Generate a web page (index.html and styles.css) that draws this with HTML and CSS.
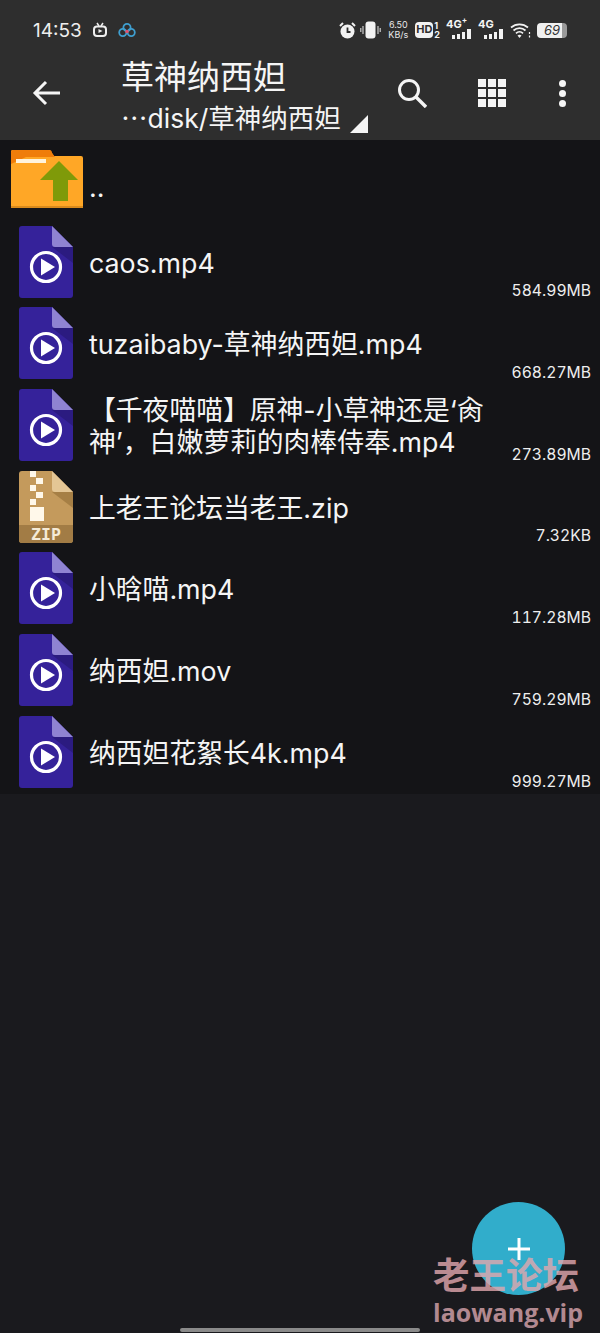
FILE: index.html
```html
<!DOCTYPE html>
<html lang="zh-CN">
<head>
    <meta charset="UTF-8">
    <meta name="viewport" content="width=device-width, initial-scale=1.0">
    <title>草神纳西妲</title>
    <link rel="stylesheet" href="styles.css">
</head>
<body>

<svg class="defs" width="0" height="0">
    <defs>
        <symbol id="video" viewBox="0 0 54 72">
            <path d="M3 0H33L54 21V69a3 3 0 0 1-3 3H3a3 3 0 0 1-3-3V3a3 3 0 0 1 3-3z" fill="#35229a"/>
            <path d="M33 21H54V37z" fill="#2b1b80"/>
            <path d="M33 0L54 21H36a3 3 0 0 1-3-3z" fill="#8f83d2"/>
            <circle cx="27" cy="41" r="14.5" fill="none" stroke="#fff" stroke-width="3.2"/>
            <path d="M22 32.5L36 41L22 49.5z" fill="#fff"/>
        </symbol>
    </defs>
</svg>

<div class="app">
    <header class="top">
        <div class="status">
            <div class="status-left">
                <span class="clock">14:53</span>
                <svg width="16" height="16" viewBox="0 0 16 16">
                    <path d="M5 1L7 4M11 1L9 4" stroke="#eee" stroke-width="1.5" fill="none"/>
                    <rect x="2" y="4.5" width="12" height="9.5" rx="3" fill="none" stroke="#eee" stroke-width="2"/>
                    <path d="M6.5 7l4 2-4 2z" fill="#eee"/>
                </svg>
                <svg width="18" height="16" viewBox="0 0 18 16">
                    <circle cx="9" cy="5.5" r="3.6" fill="none" stroke="#3f9fd0" stroke-width="1.8"/>
                    <circle cx="4.8" cy="10.5" r="3.6" fill="none" stroke="#3f9fd0" stroke-width="1.8"/>
                    <circle cx="13.2" cy="10.5" r="3.6" fill="none" stroke="#3f9fd0" stroke-width="1.8"/>
                    <circle cx="9" cy="9.5" r="1.8" fill="#e0506a"/>
                </svg>
            </div>
            <div class="status-right">
                <svg class="alarm" width="17" height="17" viewBox="0 0 17 17">
                    <circle cx="8.5" cy="9.5" r="7" fill="#f2f2f2"/>
                    <path d="M8.5 5.5v4.5h3" stroke="#2e2e2e" stroke-width="1.8" fill="none"/>
                    <path d="M1 4L4 1M16 4L13 1" stroke="#f2f2f2" stroke-width="2"/>
                </svg>
                <svg width="21" height="18" viewBox="0 0 21 18">
                    <rect x="5.5" y="0.5" width="10" height="17" rx="3" fill="#f2f2f2"/>
                    <path d="M3 5v8M0.8 7v4M18 5v8M20.2 7v4" stroke="#ccc" stroke-width="1.2"/>
                </svg>
                <div class="speed"><span>6.50</span><span>KB/s</span></div>
                <div class="hd"><b>HD</b><div class="hd-nums"><span>1</span><span>2</span></div></div>
                <div class="net">
                    <span>4G<sup>+</sup></span>
                    <svg width="20" height="10" viewBox="0 0 20 10"><path d="M0 6h3v4H0zM5 5h3v5H5zM10 3h3v7h-3zM15 0h4v10h-4z" fill="#f2f2f2"/></svg>
                </div>
                <div class="net">
                    <span>4G</span>
                    <svg width="20" height="10" viewBox="0 0 20 10"><path d="M0 6h3v4H0zM5 5h3v5H5zM10 3h3v7h-3zM15 0h4v10h-4z" fill="#f2f2f2"/></svg>
                </div>
                <svg width="21" height="16" viewBox="0 0 21 16">
                    <path d="M1 5.5a13 13 0 0 1 17 0M3.5 8.5a9 9 0 0 1 12 0M6 11.3a5 5 0 0 1 7 0" stroke="#f2f2f2" stroke-width="1.7" fill="none"/>
                    <path d="M9.5 16l-2-2.4a3 3 0 0 1 4 0z" fill="#f2f2f2"/>
                    <path d="M19.5 10v2M19.5 13.5v2" stroke="#f2f2f2" stroke-width="1.2"/>
                </svg>
                <div class="battery">69</div>
            </div>
        </div>
        <div class="toolbar">
            <button class="tool back">
                <svg width="30" height="28" viewBox="0 0 30 28">
                    <path d="M28 14H4M14 3L3 14l11 11" stroke="#f5f5f5" stroke-width="3" fill="none"/>
                </svg>
            </button>
            <div class="titles">
                <div class="title">草神纳西妲</div>
                <div class="path"><span>⋯disk/草神纳西妲</span><i class="corner"></i></div>
            </div>
            <div class="actions">
                <button class="tool">
                    <svg width="30" height="30" viewBox="0 0 30 30">
                        <circle cx="12" cy="12" r="9.5" stroke="#f5f5f5" stroke-width="3" fill="none"/>
                        <path d="M19 19l10 10" stroke="#f5f5f5" stroke-width="3.4"/>
                    </svg>
                </button>
                <button class="tool">
                    <div class="dots-grid"><i></i><i></i><i></i><i></i><i></i><i></i><i></i><i></i><i></i></div>
                </button>
                <button class="tool">
                    <div class="dots-col"><i></i><i></i><i></i></div>
                </button>
            </div>
        </div>
    </header>

    <ul class="files">
        <li class="row parent">
            <svg class="folder" width="74" height="60" viewBox="0 0 74 60">
                <path d="M2 0H40l4 6H71a2 2 0 0 1 2 2V57H1V1z" fill="#ffa726"/>
                <path d="M1 2a2 2 0 0 1 2-2H39a3 3 0 0 1 3 3l3 4H16L1 14z" fill="#ef7d0a"/>
                <rect x="6" y="9" width="30" height="4" fill="#fff3dc"/>
                <rect x="1" y="56" width="72" height="2" fill="#d98a1c"/>
                <path d="M49 11L68 30H58V51H43V30H30z" fill="#7f9a09"/>
            </svg>
            <div class="name up">..</div>
        </li>
        <li class="row">
            <svg class="icon"><use href="#video"/></svg>
            <div class="name">caos.mp4</div>
            <div class="size">584.99MB</div>
        </li>
        <li class="row">
            <svg class="icon"><use href="#video"/></svg>
            <div class="name">tuzaibaby-草神纳西妲.mp4</div>
            <div class="size">668.27MB</div>
        </li>
        <li class="row">
            <svg class="icon"><use href="#video"/></svg>
            <div class="name">【千夜喵喵】原神-小草神还是‘肏神’，白嫩萝莉的肉棒侍奉.mp4</div>
            <div class="size">273.89MB</div>
        </li>
        <li class="row">
            <svg class="icon" viewBox="0 0 54 72">
                <path d="M3 0H33L54 21V69a3 3 0 0 1-3 3H3a3 3 0 0 1-3-3V3a3 3 0 0 1 3-3z" fill="#c49a5c"/>
                <path d="M33 21H54V37z" fill="#a67f45"/>
                <path d="M33 0L54 21H36a3 3 0 0 1-3-3z" fill="#e4c695"/>
                <path d="M0 54H54V69a3 3 0 0 1-3 3H3a3 3 0 0 1-3-3z" fill="#a27c45"/>
                <path d="M11 0h6v6h-6zM17 7h7v6h-7zM11 14h6v6h-6zM17 21h7v6h-7zM11 28h6v6h-6zM11 36h14v14H11z" fill="#fff8ea"/>
                <text class="zip-label" x="27" y="69">ZIP</text>
            </svg>
            <div class="name">上老王论坛当老王.zip</div>
            <div class="size">7.32KB</div>
        </li>
        <li class="row">
            <svg class="icon"><use href="#video"/></svg>
            <div class="name">小晗喵.mp4</div>
            <div class="size">117.28MB</div>
        </li>
        <li class="row">
            <svg class="icon"><use href="#video"/></svg>
            <div class="name">纳西妲.mov</div>
            <div class="size">759.29MB</div>
        </li>
        <li class="row">
            <svg class="icon"><use href="#video"/></svg>
            <div class="name">纳西妲花絮长4k.mp4</div>
            <div class="size">999.27MB</div>
        </li>
    </ul>

    <button class="fab">
        <svg width="24" height="24" viewBox="0 0 24 24"><path d="M12 1v22M1 12h22" stroke="#fff" stroke-width="3"/></svg>
    </button>
    <div class="watermark">
        <div class="wm-cn">老王论坛</div>
        <div class="wm-en">laowang.vip</div>
    </div>
    <div class="home-bar"></div>
</div>

</body>
</html>
```

FILE: styles.css
```css
* {
    box-sizing: border-box;
}
body {
    margin: 0;
    background-color: #1a1a1e;
    font-family: Inter, "Noto Sans CJK SC", sans-serif;
    color: #f5f5f5;
}
button {
    background: none;
    border: 0;
    padding: 0;
}
.defs {
    position: absolute;
}
.app {
    position: relative;
    width: 600px;
    height: 1333px;
    overflow: hidden;
}
.top {
    height: 140px;
    background-color: #2e2e2e;
}
.status {
    height: 52px;
    padding: 8px 33px 0 33px;
    display: flex;
    justify-content: space-between;
    align-items: center;
}
.status-left {
    display: flex;
    align-items: center;
    gap: 10px;
}
.clock {
    font-size: 19px;
    color: #eee;
}
.status-right {
    display: flex;
    align-items: center;
    gap: 6px;
}
.alarm {
    margin-right: -2px;
}
.speed {
    display: flex;
    flex-direction: column;
    align-items: center;
    font-size: 9px;
    line-height: 10px;
    color: #e8e8e8;
    width: 22px;
}
.hd {
    display: flex;
    align-items: center;
    gap: 1px;
}
.hd b {
    background-color: #f2f2f2;
    color: #2e2e2e;
    font-size: 11px;
    line-height: 15px;
    border-radius: 4px;
    width: 18px;
    height: 16px;
    text-align: center;
}
.hd-nums {
    display: flex;
    flex-direction: column;
    font-size: 9px;
    line-height: 9px;
    font-weight: bold;
}
.net {
    position: relative;
    width: 26px;
    height: 18px;
    display: flex;
    justify-content: flex-end;
    align-items: flex-end;
}
.net span {
    position: absolute;
    left: 0;
    top: -2px;
    font-size: 11px;
    line-height: 11px;
    font-weight: bold;
}
.net sup {
    font-size: 8px;
    line-height: 0;
}
.battery {
    width: 30px;
    height: 15px;
    border-radius: 4px;
    background: linear-gradient(90deg, #f0f0f0 84%, #999 84%);
    color: #333;
    font-size: 13px;
    line-height: 15px;
    font-style: italic;
    text-align: center;
}
.toolbar {
    height: 88px;
    display: flex;
    align-items: flex-start;
    padding-left: 32px;
}
.tool {
    display: flex;
    align-items: center;
    justify-content: center;
}
.back {
    margin-top: 27px;
    width: 30px;
}
.titles {
    margin-left: 59px;
    width: 276px;
}
.title {
    font-size: 33px;
    line-height: 50px;
    height: 49px;
    white-space: nowrap;
}
.path {
    font-size: 26.5px;
    line-height: 34px;
    position: relative;
    white-space: nowrap;
}
.corner {
    position: absolute;
    left: 229px;
    top: 14px;
    width: 0;
    height: 0;
    border-left: 18px solid transparent;
    border-bottom: 18px solid #f5f5f5;
}
.actions {
    display: flex;
    margin-top: 27px;
}
.actions .tool {
    height: 28px;
}
.actions .tool:nth-child(1) {
    width: 30px;
}
.actions .tool:nth-child(2) {
    margin-left: 51px;
    width: 28px;
}
.actions .tool:nth-child(3) {
    margin-left: 52px;
    width: 8px;
}
.dots-grid {
    display: grid;
    grid-template-columns: repeat(3, 8px);
    gap: 2px;
}
.dots-grid i {
    height: 8px;
    background-color: #f5f5f5;
}
.dots-col {
    display: flex;
    flex-direction: column;
    gap: 3px;
}
.dots-col i {
    width: 7px;
    height: 7px;
    border-radius: 50%;
    background-color: #f5f5f5;
}
.files {
    list-style: none;
    margin: 0;
    padding: 0;
    background-color: #141417;
}
.row {
    position: relative;
    display: flex;
    align-items: center;
    height: 81.7px;
    padding: 0 0 0 19px;
}
.parent {
    padding-left: 10px;
}
.folder {
    flex: none;
    margin-top: -1px;
}
.icon {
    flex: none;
    width: 54px;
    height: 72px;
    margin-top: -2px;
}
.name {
    margin-left: 16px;
    margin-top: 0;
    width: 410px;
    font-size: 26.8px;
    line-height: 32px;
}
.up {
    margin-left: 5px;
    margin-top: 12px;
}
.size {
    position: absolute;
    right: 9px;
    bottom: 2px;
    font-size: 15.7px;
    line-height: 20px;
    color: #eee;
    font-variant-numeric: tabular-nums;
}
.zip-label {
    font-family: "DejaVu Sans Mono", monospace;
    font-size: 16.5px;
    font-weight: bold;
    fill: #f5ead6;
    text-anchor: middle;
}
.fab {
    position: absolute;
    left: 472px;
    top: 1202px;
    width: 93px;
    height: 93px;
    border-radius: 50%;
    background-color: #31adcb;
    display: flex;
    align-items: center;
    justify-content: center;
}
.watermark {
    position: absolute;
    left: 433px;
    top: 1255px;
    color: #e2a8ae;
    opacity: 0.8;
    font-weight: bold;
}
.wm-cn {
    font-size: 36.5px;
    line-height: 42px;
}
.wm-en {
    font-size: 25px;
    line-height: 30px;
    font-family: "Open Sans", sans-serif;
    color: #d8a5ad;
}
.home-bar {
    position: absolute;
    left: 180px;
    bottom: 1px;
    width: 240px;
    height: 4px;
    border-radius: 2px;
    background-color: #8a8a8a;
}
```
